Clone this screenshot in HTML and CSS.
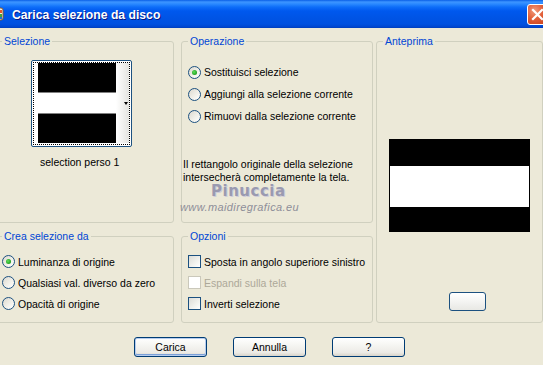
FILE: index.html
```html
<!DOCTYPE html>
<html lang="it">
<head>
<meta charset="utf-8">
<title>Carica selezione da disco</title>
<link rel="stylesheet" href="styles.css">
</head>
<body>
<div class="window">
  <div class="titlebar">
    <svg class="app-icon" width="16" height="16" viewBox="0 0 16 16">
      <rect x="1" y="2" width="14" height="12" rx="2" fill="#f4f0e0" stroke="#8a5a2a"/>
      <rect x="9" y="4" width="5" height="3" fill="#e8572a"/>
      <rect x="9" y="8" width="5" height="3" fill="#3fa33a"/>
      <rect x="11" y="11" width="3" height="2" fill="#2a6bd6"/>
    </svg>
    <span class="title">Carica selezione da disco</span>
    <span class="close-btn">
      <svg width="13" height="13" viewBox="0 0 13 13"><path d="M2 2 L11 11 M11 2 L2 11" stroke="#fff" stroke-width="2.2" stroke-linecap="square"/></svg>
    </span>
  </div>

  <div class="main">
    <div class="left-grid">
      <fieldset class="group">
        <legend>Selezione</legend>
        <div class="combo">
          <div class="combo-focus">
            <div class="thumb">
              <div class="t-black1"></div>
              <div class="t-grey"></div>
              <div class="t-white"></div>
              <div class="t-grey"></div>
              <div class="t-black2"></div>
            </div>
            <div class="strip"><span class="arrow"></span></div>
          </div>
        </div>
        <div class="sel-label">selection perso 1</div>
      </fieldset>

      <fieldset class="group">
        <legend>Operazione</legend>
        <div class="options op-options">
          <div class="row"><span class="radio checked"><span class="dot"></span></span><span>Sostituisci selezione</span></div>
          <div class="row"><span class="radio"></span><span>Aggiungi alla selezione corrente</span></div>
          <div class="row"><span class="radio"></span><span>Rimuovi dalla selezione corrente</span></div>
        </div>
        <p class="info">Il rettangolo originale della selezione<br>intersecherà completamente la tela.</p>
      </fieldset>

      <fieldset class="group">
        <legend>Crea selezione da</legend>
        <div class="options small-options">
          <div class="row"><span class="radio checked"><span class="dot"></span></span><span>Luminanza di origine</span></div>
          <div class="row"><span class="radio"></span><span>Qualsiasi val. diverso da zero</span></div>
          <div class="row"><span class="radio"></span><span>Opacità di origine</span></div>
        </div>
      </fieldset>

      <fieldset class="group">
        <legend>Opzioni</legend>
        <div class="options small-options">
          <div class="row"><span class="check"></span><span>Sposta in angolo superiore sinistro</span></div>
          <div class="row disabled"><span class="check"></span><span>Espandi sulla tela</span></div>
          <div class="row"><span class="check"></span><span>Inverti selezione</span></div>
        </div>
      </fieldset>
    </div>

    <fieldset class="group preview-group">
      <legend>Anteprima</legend>
      <div class="preview">
        <div class="p-black1"></div>
        <div class="p-white"></div>
        <div class="p-black2"></div>
      </div>
      <div class="mini-btn"></div>
    </fieldset>
  </div>

  <div class="buttons">
    <button class="btn default">Carica</button>
    <button class="btn">Annulla</button>
    <button class="btn">?</button>
  </div>

  <div class="watermark">
    <div class="wm-name">Pinuccia</div>
    <div class="wm-url">www.maidiregrafica.eu</div>
  </div>
</div>
</body>
</html>
```

FILE: styles.css
```css
* { box-sizing: border-box; }

html, body {
  margin: 0;
  padding: 0;
  width: 543px;
  height: 365px;
  overflow: hidden;
  background: #ECE9D8;
}

body {
  font-family: "Liberation Sans", Arial, sans-serif;
  font-size: 10.5px;
  color: #000;
}

.window {
  position: relative;
  width: 543px;
  height: 365px;
  overflow: hidden;
}

/* Title bar */
.titlebar {
  height: 28px;
  display: flex;
  align-items: center;
  background: linear-gradient(to bottom, #0A5FE6 0, #3D95FF 2px, #2A89FF 4px, #0E6EF8 7px, #0058EE 11px, #0054E5 18px, #0051E0 24px, #0046CF 27px, #003DB8 28px);
}

.app-icon {
  margin-left: -12px;
  flex: none;
}

.title {
  margin-left: 8px;
  padding-top: 2px;
  color: #fff;
  font-weight: bold;
  font-size: 12.2px;
  text-shadow: 1px 1px 0 #0A1883;
  white-space: nowrap;
}

.close-btn {
  margin-left: auto;
  margin-right: -5px;
  width: 21px;
  height: 21px;
  border: 1px solid #fff;
  border-radius: 3px;
  background: radial-gradient(circle at 35% 30%, #F09A7C 0, #E2603A 45%, #C43D17 100%);
  display: flex;
  align-items: center;
  justify-content: center;
  flex: none;
}

/* Main area */
.main {
  display: flex;
  margin-top: 7px;
  margin-left: -5px;
}

.left-grid {
  display: grid;
  grid-template-columns: 179px 192px;
  grid-template-rows: 188px 93px;
  column-gap: 7px;
  row-gap: 7px;
}

.group {
  margin: 0;
  padding: 0;
  min-width: 0;
  border: 1px solid #D0D0BF;
  border-radius: 3px;
  height: 100%;
}

.group legend {
  margin-left: 6px;
  padding: 0 2px;
  line-height: 13px;
  color: #0046D5;
}

/* Selezione */
.combo {
  margin: 12px 0 0 35px;
  width: 101px;
  height: 87px;
  border: 1px solid #1C5180;
  border-radius: 2px;
  padding: 1px;
  background: #fff;
}

.combo-focus {
  height: 100%;
  border: 1px dotted #000;
  padding: 0 0 1px 4px;
  display: flex;
}

.thumb {
  width: 78px;
  display: flex;
  flex-direction: column;
}

.t-black1 { height: 29px; background: #000; }
.t-grey { height: 1px; background: #808080; }
.t-white { height: 20px; background: #fff; }
.t-black2 { flex: 1; background: #000; }

.strip {
  flex: 1;
  background: linear-gradient(to right, #fff, #E4E4E0);
  display: flex;
  align-items: center;
  justify-content: flex-end;
  padding-right: 1px;
}

.arrow {
  width: 0;
  height: 0;
  border-left: 2.5px solid transparent;
  border-right: 2.5px solid transparent;
  border-top: 3px solid #000;
}

.sel-label {
  margin-top: 9px;
  padding-left: 44px;
  line-height: 13px;
}

/* Options */
.options .row {
  display: flex;
  align-items: center;
  white-space: nowrap;
}

.op-options {
  margin-top: 13px;
  padding-left: 6px;
}

.op-options .row { height: 22px; }

.small-options {
  margin-top: 8px;
  padding-left: 6px;
}

.small-options .row { height: 21px; }

.radio {
  width: 13px;
  height: 13px;
  border: 1px solid #1C5180;
  border-radius: 50%;
  background: linear-gradient(135deg, #DCD9CF 0, #F3F2EC 60%, #fff 100%);
  margin-right: 3px;
  display: flex;
  align-items: center;
  justify-content: center;
  flex: none;
}

.radio .dot {
  width: 5px;
  height: 5px;
  border-radius: 50%;
  background: radial-gradient(circle at 40% 40%, #5FE05B 0, #21A121 70%, #1A8A1A 100%);
}

.check {
  width: 13px;
  height: 13px;
  border: 1px solid #1C5180;
  background: linear-gradient(135deg, #DCDCD7 0, #F2F2EE 60%, #fff 100%);
  margin-right: 3px;
  flex: none;
}

.row.disabled { color: #ACA899; }
.row.disabled .check {
  border-color: #CAC8BB;
  background: #fff;
}

.info {
  margin: 31px 0 0;
  padding-left: 1px;
  line-height: 13px;
}

/* Anteprima */
.preview-group {
  width: 167px;
  height: 288px;
  margin-left: 3px;
}

.preview {
  margin: 91px 0 0 12px;
  width: 141px;
  height: 93px;
  background: #000;
  display: flex;
  flex-direction: column;
}

.p-black1 { height: 27px; }
.p-white { height: 41px; background: #fff; margin: 0 1px; }
.p-black2 { flex: 1; }

.mini-btn {
  margin: 60px 0 0 72px;
  width: 37px;
  height: 19px;
  border: 1px solid #1C5180;
  border-radius: 3px;
  background: linear-gradient(to bottom, #fff 0, #F4F4F2 50%, #E8E8E4 100%);
}

/* Buttons */
.buttons {
  display: flex;
  gap: 26px;
  margin-top: 14px;
  padding-left: 134px;
}

.btn {
  width: 73px;
  height: 20px;
  padding: 0;
  border: 1px solid #003C74;
  border-radius: 3px;
  background: linear-gradient(to bottom, #fff 0, #F8F8F5 30%, #ECEBE6 80%, #D8D4CA 100%);
  font-family: "Liberation Sans", Arial, sans-serif;
  font-size: 10.5px;
  color: #000;
}

.btn.default {
  box-shadow: inset 0 0 0 1px #B6CCEE, inset 0 -1px 0 1px #7BA0D8;
}

/* Watermark overlay */
.watermark {
  position: absolute;
  left: 180px;
  top: 182px;
  pointer-events: none;
}

.wm-name {
  margin-left: 31px;
  font-family: "DejaVu Sans", "Liberation Sans", sans-serif;
  font-weight: bold;
  font-size: 15px;
  letter-spacing: 0.5px;
  line-height: 18px;
  color: #9A9AB0;
  text-shadow: 1px 1px 0 #CFCDD8;
}

.wm-url {
  margin-top: 0;
  font-style: italic;
  font-size: 11px;
  letter-spacing: 0.4px;
  line-height: 14px;
  color: #8E8E98;
}
```
